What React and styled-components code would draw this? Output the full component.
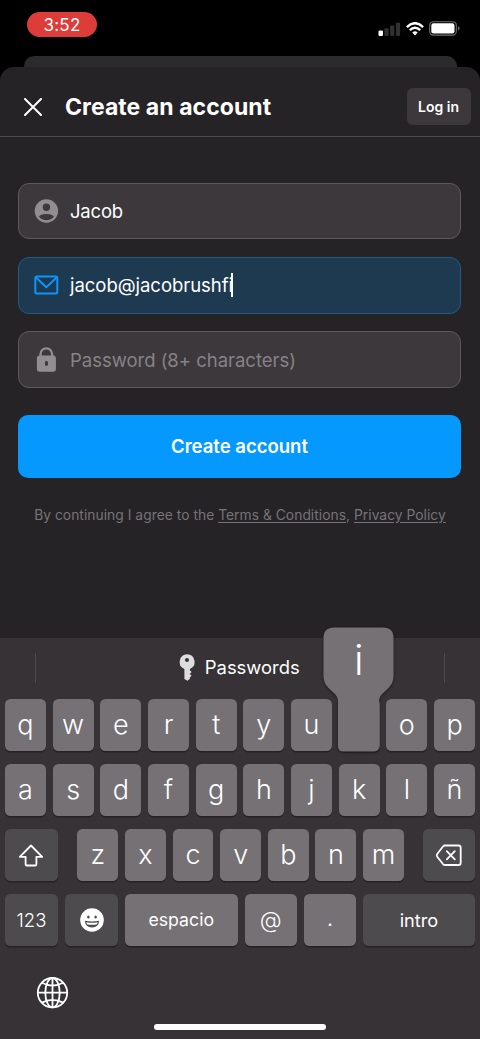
import React from "react";
import styled, { createGlobalStyle } from "styled-components";

const GlobalStyle = createGlobalStyle`
  *, *::before, *::after { box-sizing: border-box; }
  body {
    margin: 0;
    background: #000;
    font-family: Inter, "Liberation Sans", sans-serif;
    -webkit-font-smoothing: antialiased;
  }
  svg { display: block; flex: none; }
`;

const Screen = styled.div`
  width: 480px;
  height: 1039px;
  display: flex;
  flex-direction: column;
  overflow: hidden;
  background: #000;
  color: #fff;
`;

const StatusBar = styled.div`
  height: 56px;
  flex: none;
  display: flex;
  justify-content: space-between;
  align-items: flex-start;
  padding: 12px 20px 0 27px;
`;

const TimePill = styled.div`
  width: 70px;
  height: 25px;
  border-radius: 13px;
  background: #dc3d38;
  text-align: center;
  font-size: 17px;
  line-height: 26px;
  letter-spacing: 0.25px;
`;

const StatusIcons = styled.div`
  display: flex;
  align-items: center;
  gap: 5px;
  margin-top: 9px;
`;

const BackSheet = styled.div`
  height: 11px;
  flex: none;
  margin: 0 23px 0 23.5px;
  border-radius: 10px 10px 0 0;
  background: #2b2a2c;
`;

const Sheet = styled.main`
  height: 571px;
  flex: none;
  display: flex;
  flex-direction: column;
  border-radius: 14px 14px 0 0;
  background: #252326;
`;

const Header = styled.header`
  height: 69.5px;
  flex: none;
  display: flex;
  align-items: center;
  padding: 10.5px 9.5px 0 23.5px;
  border-bottom: 1.5px solid #4d4b4e;
`;

const Title = styled.h1`
  flex: 1;
  margin: 0 0 0 23.5px;
  font-size: 23px;
  font-weight: 700;
  line-height: 30px;
  letter-spacing: 0.06px;
`;

const LoginButton = styled.button`
  width: 64px;
  height: 37px;
  padding: 0;
  border: 0;
  border-radius: 6px;
  background: #3c383b;
  color: #fff;
  font: 600 14px/37px Inter, sans-serif;
`;

const Form = styled.form`
  display: flex;
  flex-direction: column;
  padding: 46.5px 19px 0 18px;
`;

const Field = styled.label`
  height: 56.4px;
  margin-bottom: 17.8px;
  display: flex;
  align-items: center;
  padding-left: 15px;
  border: 1.4px solid ${(p) => (p.$active ? "#1f5c86" : "#5d5a5d")};
  border-radius: 11px;
  background: ${(p) => (p.$active ? "#1e3a50" : "#3d383b")};
`;

const FieldText = styled.span`
  margin-left: 11px;
  font-size: 18.5px;
  font-weight: 370;
  line-height: 26px;
  letter-spacing: ${(p) => p.$spacing || "0"};
  color: ${(p) => (p.$muted ? "#868386" : "#fff")};
`;

const Caret = styled.i`
  width: 2px;
  height: 24px;
  margin-left: -2px;
  background: #fff;
`;

const SubmitButton = styled.button`
  height: 62.5px;
  margin-top: 9.5px;
  padding: 0;
  border: 0;
  border-radius: 10px;
  background: #0599ff;
  color: #fff;
  font: 600 18.5px/62px Inter, sans-serif;
`;

const Legal = styled.p`
  margin: 27px 0 0 1px;
  text-align: center;
  white-space: nowrap;
  font-size: 13.8px;
  line-height: 20px;
  letter-spacing: 0.04px;
  color: #767477;
`;

const LegalLink = styled.a`
  text-decoration: underline;
  text-underline-offset: 2px;
`;

const Keyboard = styled.section`
  flex: 1;
  display: flex;
  flex-direction: column;
  background: #373236;
`;

const Suggestions = styled.div`
  height: 61px;
  flex: none;
  display: flex;
  align-items: center;
  justify-content: space-between;
  padding: 0 35px 2px 35px;
`;

const Divider = styled.i`
  width: 1px;
  height: 30px;
  background: #4d494d;
`;

const PasswordHint = styled.div`
  display: flex;
  align-items: center;
  gap: 10px;
  padding: 0 1.5px 1px 0;
  font-size: 18.4px;
  font-weight: 380;
`;

const Rows = styled.div`
  display: flex;
  flex-direction: column;
  gap: 13px;
  padding: 0 5px;
`;

const KeyRow = styled.div`
  height: 52px;
  display: grid;
  grid-template-columns: ${(p) => p.$columns || "repeat(10, 1fr)"};
  column-gap: ${(p) => p.$gap || "6.8px"};
`;

const Key = styled.div`
  position: relative;
  display: flex;
  align-items: center;
  justify-content: center;
  border-radius: 5.5px;
  background: ${(p) => (p.$dark ? "#4e4b4e" : "#757175")};
  box-shadow: 0 1.5px 0 #252125;
  font-size: ${(p) => p.$size || "27px"};
  font-weight: ${(p) => p.$weight || 340};
  line-height: 30px;
  padding-bottom: ${(p) => p.$lift || "0"};
`;

const Popup = styled.div`
  position: absolute;
  z-index: 2;
  left: -15.5px;
  top: -72px;
  width: 71px;
  height: 126px;

  svg { position: absolute; inset: 0; overflow: visible; }
`;

const PopupLetter = styled.span`
  position: relative;
  display: block;
  text-align: center;
  font-size: 41px;
  font-weight: 320;
  line-height: 66px;
`;

const BottomBar = styled.div`
  padding: 30px 0 0 36px;
`;

const HomeIndicator = styled.div`
  width: 172px;
  height: 6px;
  margin: auto auto 9.5px 154px;
  border-radius: 3px;
  background: #fff;
`;

const Signal = () => (
  <svg width="23" height="14" viewBox="0 0 23 14">
    <rect x="0.5" y="8.5" width="4.5" height="5.5" rx="1.2" fill="#fff" />
    <rect x="6.4" y="6.2" width="4.2" height="7.8" rx="1" fill="#303030" />
    <rect x="12.1" y="3.5" width="4.2" height="10.5" rx="1" fill="#303030" />
    <rect x="17.9" y="0.7" width="4.2" height="13.3" rx="1" fill="#303030" />
  </svg>
);

const Wifi = () => (
  <svg width="18" height="14" viewBox="0 0 18 14">
    <path d="M0.9 5.1Q9-2.6 17.1 5.1" fill="none" stroke="#fff" strokeWidth="2.5" />
    <path d="M3.8 8.2Q9 3.3 14.2 8.2" fill="none" stroke="#fff" strokeWidth="2.4" />
    <path d="M6.3 10.5Q9 8.1 11.7 10.5L9 13.6Z" fill="#fff" />
  </svg>
);

const Battery = () => (
  <svg width="31" height="15" viewBox="0 0 31 15">
    <rect x="0.7" y="0.7" width="26.6" height="13.4" rx="3.6" fill="none" stroke="#727272" strokeWidth="1.1" />
    <rect x="2.3" y="2.3" width="23.2" height="10.2" rx="2.1" fill="#fff" />
    <path d="M29 5.2q1.5.5 1.5 2.2t-1.5 2.2z" fill="#727272" />
  </svg>
);

const Close = () => (
  <svg width="18" height="18" viewBox="0 0 18 18" fill="none" stroke="#fff" strokeWidth="2" strokeLinecap="round">
    <path d="M1 1l16 16M17 1L1 17" />
  </svg>
);

const UserIcon = () => (
  <svg width="25" height="25" viewBox="0 0 25 25">
    <circle cx="12.4" cy="12" r="11.7" fill="#918e91" />
    <circle cx="12.4" cy="8.3" r="3.7" fill="#3d383b" />
    <path d="M4.9 17.5C7.4 14.2 17.4 14.2 19.9 17.5C16.4 22.5 8.4 22.5 4.9 17.5Z" fill="#3d383b" />
  </svg>
);

const MailIcon = () => (
  <svg width="25" height="20" viewBox="0 0 25 20" fill="none" stroke="#0b95fb" strokeWidth="2" strokeLinejoin="round">
    <rect x="1.3" y="1.6" width="22" height="16.8" rx="1.5" />
    <path d="M1.7 2.2L12.3 12.2L22.9 2.2" />
  </svg>
);

const LockIcon = () => (
  <svg width="25" height="26" viewBox="0 0 25 26">
    <path d="M6.5 10.5V7.1a5.8 5.8 0 0 1 11.6 0v3.4" fill="none" stroke="#918e91" strokeWidth="2.3" />
    <rect x="2.9" y="8.6" width="19" height="16.2" rx="2.8" fill="#918e91" />
    <rect x="11" y="14" width="2.9" height="5" rx="1.4" fill="#3d383b" />
  </svg>
);

const KeyIcon = () => (
  <svg width="16" height="27" viewBox="0 0 16 27">
    <path
      fillRule="evenodd"
      fill="#dedcde"
      d="M8 .3a7.6 7.6 0 0 1 2.9 14.6v1.3l1.7 1.7-1.8 2 1.8 1.9-1.8 1.8.2 1.1-2.6 2.1L5.4 25V14.9A7.6 7.6 0 0 1 8 .3ZM8 4a2 2 0 1 0 0 4.1A2 2 0 0 0 8 4Z"
    />
  </svg>
);

const ShiftIcon = () => (
  <svg width="26" height="23" viewBox="0 0 26 23" fill="none" stroke="#fff" strokeWidth="1.8" strokeLinejoin="round">
    <path d="M13 1.5L24.2 12.8H18.4V20.2q0 1.3-1.3 1.3H8.9q-1.3 0-1.3-1.3V12.8H1.8Z" />
  </svg>
);

const DeleteIcon = () => (
  <svg width="27" height="22" viewBox="0 0 27 22" fill="none" stroke="#fff" strokeWidth="1.8" strokeLinejoin="round" strokeLinecap="round">
    <path d="M9.9 1.5H23.4Q25.7 1.5 25.7 3.8V18.7Q25.7 21 23.4 21H9.9Q8.9 21 8.2 20.3L2.2 12.7Q1.3 11.3 2.2 10L8.2 2.3Q8.9 1.5 9.9 1.5Z" />
    <path d="M11.8 7.1l8 8.2M19.8 7.1l-8 8.2" />
  </svg>
);

const EmojiIcon = () => (
  <svg width="24" height="24" viewBox="0 0 24 24">
    <circle cx="12" cy="12" r="11.8" fill="#fff" />
    <ellipse cx="8.4" cy="9" rx="1.25" ry="1.6" fill="#4e4b4e" />
    <ellipse cx="15.6" cy="9" rx="1.25" ry="1.6" fill="#4e4b4e" />
    <path d="M4.8 12.8Q12 14.2 19.2 12.8Q18.6 19.4 12 19.4T4.8 12.8Z" fill="#4e4b4e" />
    <path d="M6.2 14.2Q12 15.3 17.8 14.2L17 16.2Q12 17.3 7 16.2Z" fill="#fff" />
  </svg>
);

const GlobeIcon = () => (
  <svg width="33" height="33" viewBox="0 0 33 33" fill="none" stroke="#fff" strokeWidth="1.8">
    <circle cx="16.5" cy="16.7" r="14.7" />
    <ellipse cx="16.5" cy="16.7" rx="7.2" ry="14.7" />
    <path d="M16.5 1.9V31.5M1.7 16.7H31.3M5.8 6.8Q16.5 12.4 27.2 6.8M5.8 26.6Q16.5 21 27.2 26.6" />
  </svg>
);

const PopupShape = styled.path`
  fill: #757175;
  filter: drop-shadow(0 1px 1.5px rgba(0, 0, 0, 0.45));
`;

const KeyPopup = ({ letter }) => (
  <Popup>
    <svg width="71" height="126" viewBox="0 0 71 126">
      <PopupShape d="M11 0.5H60Q70.5 0.5 70.5 11V49Q70.5 56 65.5 61L59 67Q56 70 56 75V119Q56 124.5 50.5 124.5H20.5Q15 124.5 15 119V75Q15 70 12 67L5.5 61Q0.5 56 0.5 49V11Q0.5 0.5 11 0.5Z" />
    </svg>
    <PopupLetter>{letter}</PopupLetter>
  </Popup>
);

const Letters = ({ letters, pressed }) =>
  [...letters].map((c) => (
    <Key key={c}>
      {c === pressed ? <KeyPopup letter={c} /> : c}
    </Key>
  ));

export default function App() {
  return (
    <Screen>
      <GlobalStyle />
      <StatusBar>
        <TimePill>3:52</TimePill>
        <StatusIcons>
          <Signal />
          <Wifi />
          <Battery />
        </StatusIcons>
      </StatusBar>
      <BackSheet />
      <Sheet>
        <Header>
          <Close />
          <Title>Create an account</Title>
          <LoginButton>Log in</LoginButton>
        </Header>
        <Form>
          <Field>
            <UserIcon />
            <FieldText $spacing="-0.2px">Jacob</FieldText>
          </Field>
          <Field $active>
            <MailIcon />
            <FieldText $spacing="-0.03px">jacob@jacobrushfi</FieldText>
            <Caret />
          </Field>
          <Field>
            <LockIcon />
            <FieldText $muted $spacing="-0.02px">Password (8+ characters)</FieldText>
          </Field>
          <SubmitButton type="button">Create account</SubmitButton>
          <Legal>
            By continuing I agree to the <LegalLink>Terms &amp; Conditions</LegalLink>, <LegalLink>Privacy Policy</LegalLink>
          </Legal>
        </Form>
      </Sheet>
      <Keyboard>
        <Suggestions>
          <Divider />
          <PasswordHint>
            <KeyIcon />
            Passwords
          </PasswordHint>
          <Divider />
        </Suggestions>
        <Rows>
          <KeyRow>
            <Letters letters="qwertyuiop" pressed="i" />
          </KeyRow>
          <KeyRow>
            <Letters letters="asdfghjklñ" />
          </KeyRow>
          <KeyRow $columns="52.5px 6.4px repeat(7, 40.8px) 5.4px 1fr">
            <Key $dark><ShiftIcon /></Key>
            <span />
            <Letters letters="zxcvbnm" />
            <span />
            <Key $dark><DeleteIcon /></Key>
          </KeyRow>
          <KeyRow $columns="53px 53px 112.5px 52.5px 52px 1fr" $gap="7px">
            <Key $dark $size="18.5px" $weight={360}>123</Key>
            <Key $dark><EmojiIcon /></Key>
            <Key $size="17.7px" $weight={370}>espacio</Key>
            <Key $size="22.5px" $weight={340} $lift="1px">@</Key>
            <Key $size="19px" $weight={400} $lift="1px">.</Key>
            <Key $dark $size="18.2px" $weight={370} $lift="1px">intro</Key>
          </KeyRow>
        </Rows>
        <BottomBar>
          <GlobeIcon />
        </BottomBar>
        <HomeIndicator />
      </Keyboard>
    </Screen>
  );
}
